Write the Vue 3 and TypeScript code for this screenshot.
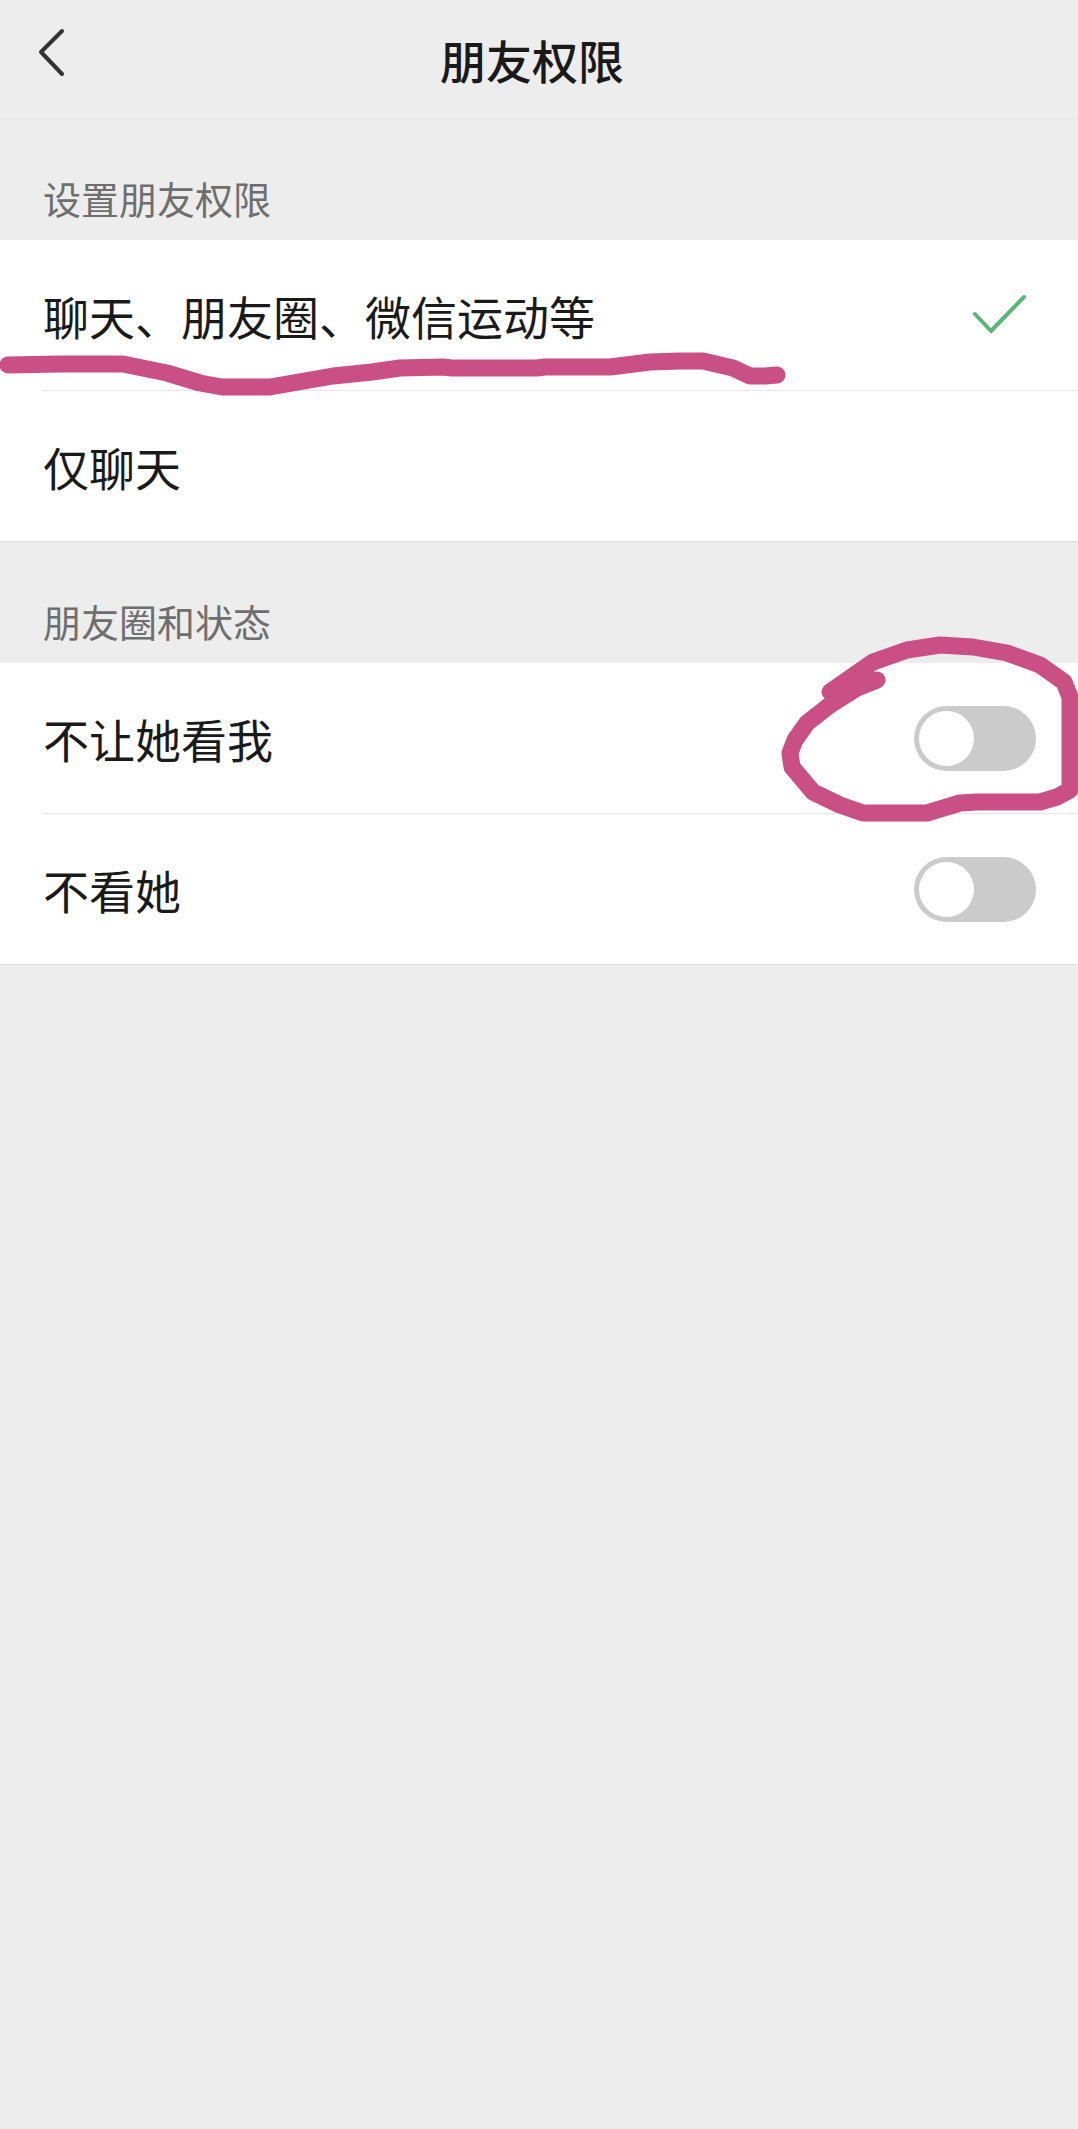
<script setup lang="ts">
const scopeRows = [
  { label: '聊天、朋友圈、微信运动等', checked: true },
  { label: '仅聊天', checked: false },
]

const momentRows = ['不让她看我', '不看她']

const underline =
  'M8 365 L60 364 L123 364 L167 373 L200 383 L222 387 L270 387 L333 376 L372 372 L400 368 L443 367 L452 368 L537 368 L545 367 L610 367 L650 362 L680 361 L703 361 L733 368 L750 376 L765 376 L777 375'

const circle =
  'M830 692 L873 662 L907 650 L940 645 L973 647 L1007 653 L1040 665 L1064 682 L1070 697 L1070 790 L1057 797 L1040 802 L977 802 L960 803 L927 813 L863 813 L840 805 L813 792 L792 767 L790 753 L795 740 L807 723 L830 705 L857 688 L877 680'
</script>

<template>
  <div class="page">
    <header class="topbar">
      <svg class="back" width="30" height="54" viewBox="0 0 30 54" fill="none" stroke="#333" stroke-width="4" stroke-linecap="round" stroke-linejoin="round">
        <path d="M24 5 L3 26 L24 48" />
      </svg>
      <h1 class="title">朋友权限</h1>
    </header>

    <section>
      <h2 class="section-label">设置朋友权限</h2>
      <ul class="group">
        <li v-for="row in scopeRows" :key="row.label" class="row">
          <span class="row-text">{{ row.label }}</span>
          <svg v-if="row.checked" class="check" width="60" height="44" viewBox="0 0 60 44" fill="none" stroke="#5cb673" stroke-width="4" stroke-linecap="round" stroke-linejoin="round">
            <path d="M5 21 L21 38 L54 4" />
          </svg>
        </li>
      </ul>
    </section>

    <section>
      <h2 class="section-label">朋友圈和状态</h2>
      <ul class="group">
        <li v-for="label in momentRows" :key="label" class="row">
          <span class="row-text">{{ label }}</span>
          <span class="switch"><span class="knob"></span></span>
        </li>
      </ul>
    </section>

    <!-- hand-drawn markup on top of the screenshot -->
    <svg class="scribble" width="1078" height="2129" viewBox="0 0 1078 2129" fill="none" stroke="#c94f85" stroke-width="17" stroke-linecap="round" stroke-linejoin="round">
      <path :d="underline" />
      <path :d="circle" />
    </svg>
  </div>
</template>

<style scoped>
.page {
  position: relative;
  min-height: 2129px;
  overflow: hidden;
  background: #ededed;
  font-family: "Noto Sans CJK SC", "Noto Sans", sans-serif;
}

.topbar {
  position: relative;
  display: flex;
  align-items: center;
  justify-content: center;
  height: 118px;
  padding-right: 14px;
  border-bottom: 1px solid #e4e4e4;
}

.back {
  position: absolute;
  left: 38px;
  top: 26px;
}

.title {
  margin: 0;
  font-size: 46px;
  line-height: 106px;
  font-weight: 500;
  color: #1a1a1a;
}

.section-label {
  display: flex;
  align-items: flex-end;
  height: 121px;
  margin: 0;
  padding: 0 0 23px 43px;
  box-sizing: border-box;
  font-size: 38px;
  line-height: 38px;
  font-weight: 400;
  color: #6e6e6e;
}

.group {
  margin: 0;
  padding: 0;
  list-style: none;
  background: #fff;
  border-bottom: 1px solid #e0e0e0;
}

.row {
  position: relative;
  display: flex;
  align-items: center;
  justify-content: space-between;
  height: 150px;
  padding: 0 42px 0 43px;
}

.row + .row {
  height: 151px;
  padding-top: 1px;
  box-sizing: border-box;
}

.row + .row::before {
  content: "";
  position: absolute;
  left: 42px;
  right: 0;
  top: 0;
  border-top: 1px solid #e6e6e6;
}

.row-text {
  font-size: 46px;
  line-height: 60px;
  color: #1a1a1a;
}

.check {
  margin-right: 6px;
}

.switch {
  display: block;
  width: 122px;
  height: 65px;
  box-sizing: border-box;
  padding: 5px;
  border-radius: 33px;
  background: #cbcbcb;
}

.knob {
  display: block;
  width: 55px;
  height: 55px;
  border-radius: 50%;
  background: #fff;
}

.scribble {
  position: absolute;
  left: 0;
  top: 0;
  pointer-events: none;
}
</style>

<style>
html,
body {
  background: #ededed;
}
</style>
